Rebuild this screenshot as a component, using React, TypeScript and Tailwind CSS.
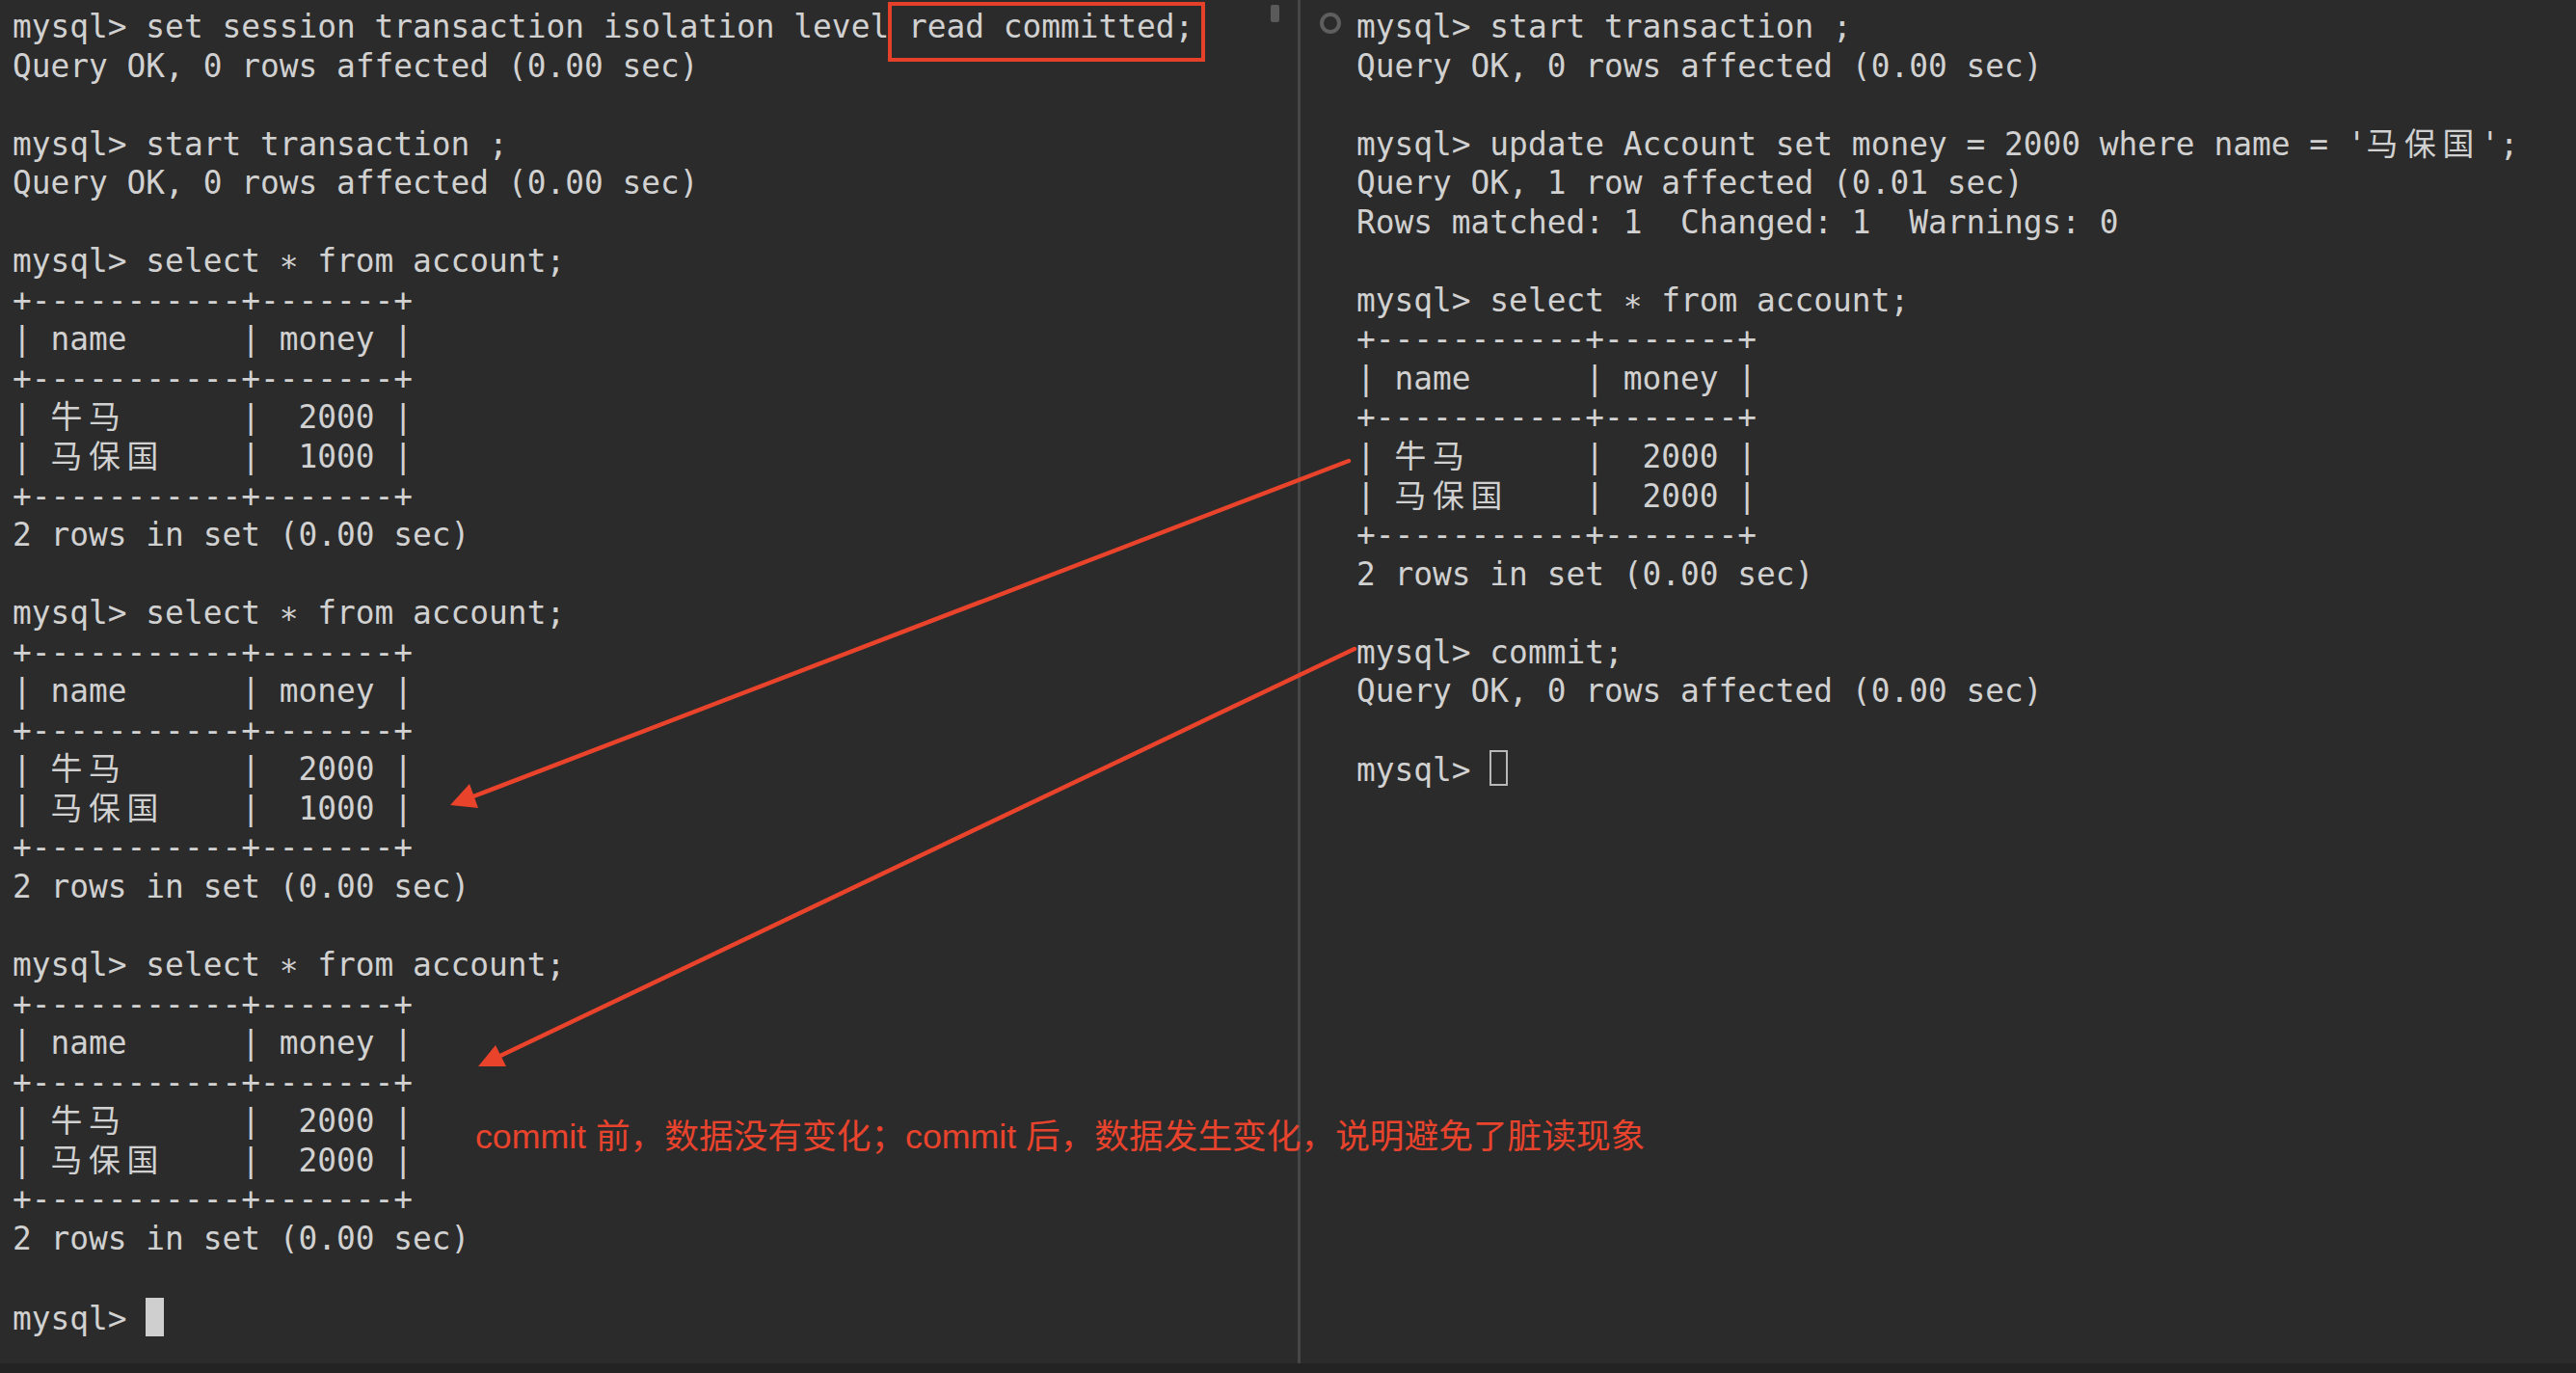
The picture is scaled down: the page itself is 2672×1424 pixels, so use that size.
import React from "react";

const CJK = /[\u3400-\u9fff\uff00-\uffef\u3000-\u303f]/;

function Seg({ text }: { text: string }) {
  const parts: React.ReactNode[] = [];
  let buf = "";
  let k = 0;
  for (const ch of text) {
    if (CJK.test(ch)) {
      if (buf) {
        parts.push(<span key={k++}>{buf}</span>);
        buf = "";
      }
      parts.push(
        <span key={k++} className="inline-block w-[2ch]">
          {ch}
        </span>
      );
    } else buf += ch;
  }
  if (buf) parts.push(<span key={k++}>{buf}</span>);
  return <>{parts}</>;
}

function Line({ children }: { children?: React.ReactNode }) {
  return <div className="h-[40.55px] whitespace-pre">{children}</div>;
}

const SEL = "mysql> select \u2217 from account;";

const leftLines: string[] = [
  "mysql> set session transaction isolation level read committed;",
  "Query OK, 0 rows affected (0.00 sec)",
  "",
  "mysql> start transaction ;",
  "Query OK, 0 rows affected (0.00 sec)",
  "",
  SEL,
  "+-----------+-------+",
  "| name      | money |",
  "+-----------+-------+",
  "| 牛马      |  2000 |",
  "| 马保国    |  1000 |",
  "+-----------+-------+",
  "2 rows in set (0.00 sec)",
  "",
  SEL,
  "+-----------+-------+",
  "| name      | money |",
  "+-----------+-------+",
  "| 牛马      |  2000 |",
  "| 马保国    |  1000 |",
  "+-----------+-------+",
  "2 rows in set (0.00 sec)",
  "",
  SEL,
  "+-----------+-------+",
  "| name      | money |",
  "+-----------+-------+",
  "| 牛马      |  2000 |",
  "| 马保国    |  2000 |",
  "+-----------+-------+",
  "2 rows in set (0.00 sec)",
  "",
];

const rightLines: string[] = [
  "mysql> start transaction ;",
  "Query OK, 0 rows affected (0.00 sec)",
  "",
  "mysql> update Account set money = 2000 where name = '马保国';",
  "Query OK, 1 row affected (0.01 sec)",
  "Rows matched: 1  Changed: 1  Warnings: 0",
  "",
  SEL,
  "+-----------+-------+",
  "| name      | money |",
  "+-----------+-------+",
  "| 牛马      |  2000 |",
  "| 马保国    |  2000 |",
  "+-----------+-------+",
  "2 rows in set (0.00 sec)",
  "",
  "mysql> commit;",
  "Query OK, 0 rows affected (0.00 sec)",
  "",
];

export default function App() {
  return (
    <div className="relative w-[2672px] h-[1424px] overflow-hidden bg-[#2b2b2b] flex flex-col font-['DejaVu_Sans_Mono','Noto_Sans_CJK_SC',monospace] text-[32.85px] leading-[40.55px] text-[#d1d1d1]">
      <div className="flex flex-1 min-h-0">
        {/* left terminal pane */}
        <div className="relative w-[1346px] pl-[13px] pt-[8px]">
          {leftLines.map((l, i) => (
            <Line key={i}>
              <Seg text={l} />
            </Line>
          ))}
          <Line>
            <span>mysql&gt; </span>
            <span className="inline-block w-[19px] h-[40px] bg-[#cfcfcf] align-[-7px]" />
          </Line>
          <div className="absolute right-[19px] top-[5px] w-[9px] h-[18px] rounded-[2px] bg-[#5a5a5a]" />
        </div>

        {/* divider */}
        <div className="w-[3px] bg-[#474747]" />

        {/* right terminal pane */}
        <div className="flex flex-1">
          <div className="w-[58px] shrink-0">
            <div className="ml-[20px] mt-[13px] w-[22px] h-[22px] rounded-full border-[4px] border-[#5e5e5e]" />
          </div>
          <div className="pt-[8px]">
            {rightLines.map((l, i) => (
              <Line key={i}>
                <Seg text={l} />
              </Line>
            ))}
            <Line>
              <span>mysql&gt; </span>
              <span className="inline-block w-[19px] h-[37px] border-2 border-[#b8b8b8] align-[-5px]" />
            </Line>
          </div>
        </div>
      </div>
      <div className="h-[10px] bg-[#232323]" />

      {/* annotations */}
      <div className="absolute left-[921px] top-[2px] w-[329px] h-[62px] border-[4px] border-[#e5402a]" />

      <svg
        className="absolute left-0 top-0 pointer-events-none"
        width="2672"
        height="1424"
        viewBox="0 0 2672 1424"
      >
        <line x1="1399" y1="478" x2="491" y2="826" stroke="#e9432b" strokeWidth="4.5" strokeLinecap="round" />
        <polygon points="467,835 496,838 487,813" fill="#e9432b" />
        <line x1="1405" y1="673" x2="519" y2="1095" stroke="#e9432b" strokeWidth="4.5" strokeLinecap="round" />
        <polygon points="496,1106 525,1106 514,1084" fill="#e9432b" />
      </svg>

      <div className="absolute left-[493px] top-[1162px] whitespace-pre font-['Liberation_Sans','Noto_Sans_CJK_SC',sans-serif] text-[35.7px] leading-none text-[#e8432d]">
        commit 前，数据没有变化；commit 后，数据发生变化，说明避免了脏读现象
      </div>
    </div>
  );
}
